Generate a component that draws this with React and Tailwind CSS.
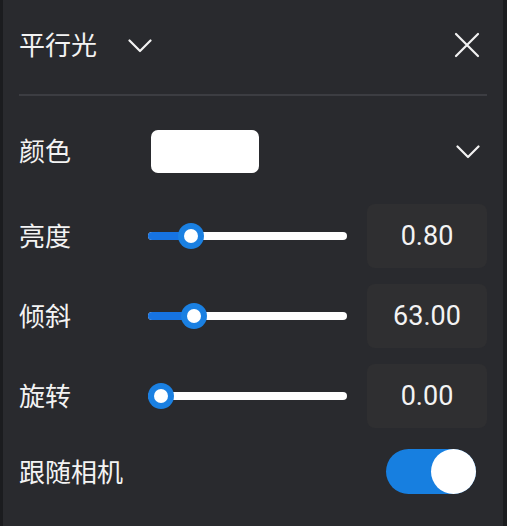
import { useState } from "react";

const font = { fontFamily: '"Noto Sans", "Noto Sans CJK SC", sans-serif' };

const Chevron = ({ className }) => (
  <svg width="24" height="14" viewBox="0 0 24 14" className={className} fill="none">
    <path d="M1.5 1.5 L12 12 L22.5 1.5" stroke="#f2f2f2" strokeWidth="2.2" strokeLinecap="round" strokeLinejoin="round" />
  </svg>
);

const Close = () => (
  <svg width="26" height="26" viewBox="0 0 26 26" fill="none">
    <path d="M2 2 L24 24 M24 2 L2 24" stroke="#f2f2f2" strokeWidth="2.2" strokeLinecap="round" />
  </svg>
);

const SliderRow = ({ label, value, pos }) => (
  <div className="flex items-center h-[64px]">
    <div className="w-[129px] text-[26px] leading-none text-[#f3f3f3]">{label}</div>
    <div className="relative w-[199px] h-[8px] rounded-full bg-white">
      <div className="absolute left-0 top-0 h-[8px] rounded-full bg-[#1673e2]" style={{ width: pos + 4 }} />
      <div
        className="absolute top-1/2 -translate-y-1/2 w-[26px] h-[26px] rounded-full bg-[#1a80e2] flex items-center justify-center"
        style={{ left: pos - 13 }}
      >
        <div className="w-[14px] h-[14px] rounded-full bg-white" />
      </div>
    </div>
    <div className="ml-auto w-[120px] h-[64px] rounded-[8px] bg-[#2f2f31] flex items-center justify-center text-[27px] text-[#f3f3f3] font-['Roboto',sans-serif]">
      {value}
    </div>
  </div>
);

export default function App() {
  const [follow, setFollow] = useState(true);

  return (
    <div className="w-[507px] h-[526px] bg-[#1b1c1f] flex pl-[3px] pr-[4px]" style={font}>
      <div className="flex-1 bg-[#292a2e] px-[16px] flex flex-col">
        {/* header */}
        <div className="flex items-center h-[48px] mt-[21px]">
          <span className="text-[26px] leading-none text-[#f3f3f3]">平行光</span>
          <Chevron className="ml-[31px] mt-[2px]" />
          <button className="ml-auto mr-[7px]">
            <Close />
          </button>
        </div>
        <div className="h-[2px] bg-[#3c3d42] mt-[25px]" />

        {/* colour */}
        <div className="flex items-center h-[64px] mt-[23px]">
          <div className="w-[132px] text-[26px] leading-none text-[#f3f3f3]">颜色</div>
          <div className="w-[108px] h-[43px] mt-[1px] rounded-[7px] bg-white" />
          <Chevron className="ml-auto mr-[7px] mt-[2px]" />
        </div>

        <div className="flex flex-col gap-[16px] mt-[21px]">
          <SliderRow label="亮度" value="0.80" pos={43} />
          <SliderRow label="倾斜" value="63.00" pos={46} />
          <SliderRow label="旋转" value="0.00" pos={13} />
        </div>

        {/* follow camera */}
        <div className="flex items-center h-[45px] mt-[21px]">
          <span className="text-[26px] leading-none text-[#f3f3f3]">跟随相机</span>
          <button
            onClick={() => setFollow(!follow)}
            className={`ml-auto mr-[11px] w-[90px] h-[45px] rounded-full flex items-center ${follow ? "bg-[#177fe0] justify-end" : "bg-[#55565b] justify-start"}`}
          >
            <div className="w-[45px] h-[45px] rounded-full bg-white" />
          </button>
        </div>
      </div>
    </div>
  );
}
